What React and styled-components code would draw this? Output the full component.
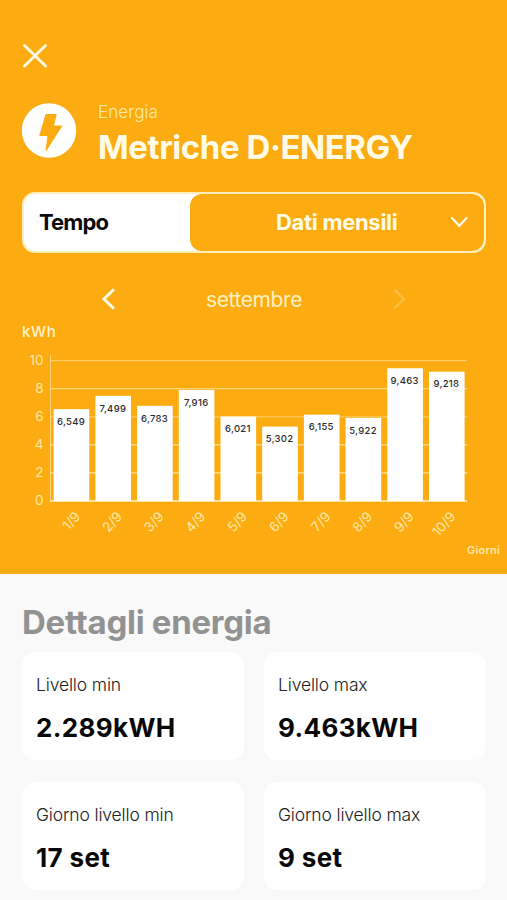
import React from "react";
import styled, { createGlobalStyle } from "styled-components";

const GlobalStyle = createGlobalStyle`
    * {
        box-sizing: border-box;
    }
    body {
        margin: 0;
        background: #f9f9f9;
        font-family: Inter, "Liberation Sans", sans-serif;
    }
    p, h1, h2 {
        margin: 0;
    }
`;

const Screen = styled.main`
    width: 100%;
    max-width: 507px;
    height: 900px;
    overflow: hidden;
    background: #f9f9f9;
`;
const Hero = styled.section`
    height: 574px;
    padding-top: 43px;
    background: #fcac11;
    color: #fffbe6;
`;
const IconButton = styled.button`
    display: flex;
    padding: 0;
    border: 0;
    background: none;
    color: inherit;
    opacity: ${(props) => (props.disabled ? 0.25 : 1)};
`;
const CloseButton = styled(IconButton)`
    margin-left: 22px;
`;
const Header = styled.header`
    display: flex;
    margin: 35px 22px 0;
    height: 56px;
`;
const Badge = styled.svg`
    width: 55px;
    height: 55px;
    flex-shrink: 0;
`;
const Heading = styled.div`
    margin-left: 21px;
`;
const Category = styled.p`
    font-size: 17px;
    line-height: 18px;
    font-weight: 300;
    letter-spacing: 0.1px;
    color: #ffe9ab;
`;
const Title = styled.h1`
    margin-top: 5px;
    font-size: 33px;
    line-height: 42px;
    font-weight: 700;
    letter-spacing: -0.45px;
    white-space: nowrap;
`;
const Selector = styled.div`
    display: flex;
    height: 61px;
    margin: 33px 21px 0 22px;
    border: 2px solid #ffeeb9;
    border-radius: 13px;
    background: #fff;
    overflow: hidden;
`;
const SelectorLabel = styled.div`
    width: 166px;
    padding-left: 15px;
    line-height: 57px;
    font-size: 22px;
    font-weight: 700;
    letter-spacing: -0.9px;
    color: #0a0a0a;
`;
const SelectorValue = styled.div`
    flex: 1;
    display: flex;
    align-items: center;
    justify-content: space-between;
    padding: 0 16px 1px 86px;
    border-radius: 12px;
    background: #fcac11;
    font-size: 22px;
    line-height: 26px;
    font-weight: 700;
    letter-spacing: -0.3px;
`;
const MonthNav = styled.div`
    display: flex;
    align-items: center;
    justify-content: space-between;
    height: 26px;
    margin: 33px 100px 0 101px;
    font-size: 21px;
    letter-spacing: -0.4px;
    color: #fff0c0;
`;
const Chart = styled.svg`
    display: block;
    width: 507px;
    height: 254px;
    margin-top: 8px;
    font-family: Inter, "Liberation Sans", sans-serif;
`;
const Details = styled.section`
    padding: 28px 21px 0 22px;
`;
const DetailsTitle = styled.h2`
    font-size: 33px;
    line-height: 40px;
    font-weight: 700;
    letter-spacing: -0.28px;
    color: #929292;
`;
const CardGrid = styled.div`
    display: grid;
    grid-template-columns: 1fr 1fr;
    gap: 22px 20px;
    margin-top: 10px;
`;
const Card = styled.div`
    height: 108px;
    padding: 21px 14px 0;
    border-radius: 13px;
    background: #fff;
`;
const CardLabel = styled.p`
    font-size: 17.5px;
    line-height: 24px;
    font-weight: 300;
    letter-spacing: -0.15px;
    color: #222;
`;
const CardValue = styled.p`
    margin-top: 15px;
    font-size: 26px;
    line-height: 32px;
    font-weight: 700;
    letter-spacing: 0.35px;
    color: #080808;
`;

const days = [
    { day: "1/9", value: 6.549 },
    { day: "2/9", value: 7.499 },
    { day: "3/9", value: 6.783 },
    { day: "4/9", value: 7.916 },
    { day: "5/9", value: 6.021 },
    { day: "6/9", value: 5.302 },
    { day: "7/9", value: 6.155 },
    { day: "8/9", value: 5.922 },
    { day: "9/9", value: 9.463 },
    { day: "10/9", value: 9.218 },
];

const details = [
    { label: "Livello min", value: "2.289kWH" },
    { label: "Livello max", value: "9.463kWH" },
    { label: "Giorno livello min", value: "17 set" },
    { label: "Giorno livello max", value: "9 set" },
];

const BASE = 181;
const UNIT = 14.03;
const STEP = 41.7;

function EnergyChart() {
    return (
        <Chart viewBox="0 0 507 254">
            <text x="22" y="17" fontSize="15" fontWeight="500" letterSpacing="0.6" fill="#fff3cc">
                kWh
            </text>
            {[0, 2, 4, 6, 8, 10].map((tick) => {
                const y = BASE - tick * UNIT;
                return (
                    <g key={tick}>
                        <line
                            x1="50"
                            x2="467"
                            y1={y}
                            y2={y}
                            stroke="#ffe7a6"
                            strokeWidth={tick === 0 ? 2 : 1.2}
                            strokeOpacity={tick === 10 || tick === 6 ? 0.55 : 0.9}
                        />
                        <text x="43.5" y={y + 4} textAnchor="end" fontSize="13.5" fill="#ffe7a6">
                            {tick}
                        </text>
                    </g>
                );
            })}
            <line x1="50.5" x2="50.5" y1="35" y2={BASE} stroke="#ffe7a6" strokeOpacity="0.7" />
            {days.map((item, i) => {
                const x = 53.7 + i * STEP;
                const top = BASE - item.value * UNIT;
                return (
                    <g key={item.day}>
                        <rect x={x} y={top} width="35.6" height={BASE - top} fill="#fff" />
                        <text
                            x={x + 17.4}
                            y={top + 15.8}
                            textAnchor="middle"
                            fontSize="9.5"
                            fontWeight="500"
                            letterSpacing="0.3"
                            fill="#2b2b2b"
                        >
                            {item.value.toFixed(3).replace(".", ",")}
                        </text>
                        <text
                            transform={`translate(${x + 27.4} 197) rotate(-48)`}
                            textAnchor="end"
                            fontSize="13.5"
                            fill="#ffe7a6"
                        >
                            {item.day}
                        </text>
                    </g>
                );
            })}
            <text x="467" y="234" fontSize="11" fontWeight="600" letterSpacing="0.2" fill="#ffe7a6">
                Giorni
            </text>
        </Chart>
    );
}

function App() {
    return (
        <Screen>
            <GlobalStyle />
            <Hero>
                <CloseButton aria-label="Chiudi">
                    <svg width="25" height="25" viewBox="0 0 25 25">
                        <path
                            d="M2.5 2.5l21 20.5M23.5 2.5L2.5 23"
                            stroke="currentColor"
                            strokeWidth="2.8"
                            strokeLinecap="round"
                        />
                    </svg>
                </CloseButton>
                <Header>
                    <Badge viewBox="0 0 55 55">
                        <circle cx="27" cy="27.5" r="27.2" fill="#fff" />
                        <path
                            d="M23.9 11.5h10.3l-2.8 11.5h8.4L24 47.7l2-15.2h-8.2z"
                            fill="#fcac11"
                            stroke="#fcac11"
                            strokeWidth="1"
                            strokeLinejoin="round"
                        />
                    </Badge>
                    <Heading>
                        <Category>Energia</Category>
                        <Title>Metriche D·ENERGY</Title>
                    </Heading>
                </Header>
                <Selector>
                    <SelectorLabel>Tempo</SelectorLabel>
                    <SelectorValue>
                        Dati mensili
                        <svg width="18" height="12" viewBox="0 0 18 12" fill="none">
                            <path d="M2 2l7.3 7.8L16.5 2" stroke="currentColor" strokeWidth="2.2" strokeLinecap="round" />
                        </svg>
                    </SelectorValue>
                </Selector>
                <MonthNav>
                    <IconButton aria-label="Precedente">
                        <svg width="14" height="22" viewBox="0 0 14 22" fill="none">
                            <path d="M12 2.2L3 11l9 8.8" stroke="#fffbe6" strokeWidth="3" strokeLinecap="round" />
                        </svg>
                    </IconButton>
                    settembre
                    <IconButton aria-label="Successivo" disabled>
                        <svg width="14" height="22" viewBox="0 0 14 22" fill="none">
                            <path d="M2 2.2L11 11l-9 8.8" stroke="#fff0c0" strokeWidth="2.6" strokeLinecap="round" />
                        </svg>
                    </IconButton>
                </MonthNav>
                <EnergyChart />
            </Hero>
            <Details>
                <DetailsTitle>Dettagli energia</DetailsTitle>
                <CardGrid>
                    {details.map((item) => (
                        <Card key={item.label}>
                            <CardLabel>{item.label}</CardLabel>
                            <CardValue>{item.value}</CardValue>
                        </Card>
                    ))}
                </CardGrid>
            </Details>
        </Screen>
    );
}

export default App;
